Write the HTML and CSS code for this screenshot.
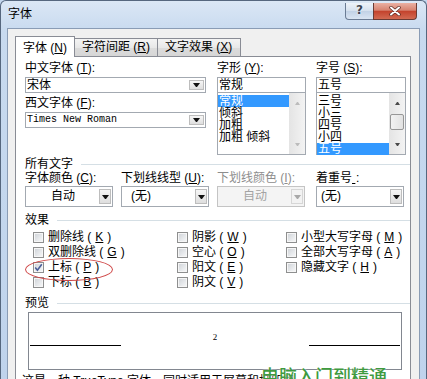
FILE: index.html
```html
<!DOCTYPE html>
<html lang="zh-CN">
<head>
    <meta charset="UTF-8">
    <title>字体</title>
    <link rel="stylesheet" href="styles.css">
</head>
<body>
    <div class="window">
        <div class="titlebar">
            <span class="title">字体</span>
            <div class="caption">
                <div class="cap-help">?</div>
                <div class="cap-close">
                    <svg width="14" height="10" viewBox="0 0 14 10"><path d="M3 1.5 L11 8.5 M11 1.5 L3 8.5" stroke="#5a2a22" stroke-width="3.4" stroke-linecap="round"/><path d="M3 1.5 L11 8.5 M11 1.5 L3 8.5" stroke="#fff" stroke-width="2" stroke-linecap="round"/></svg>
                </div>
            </div>
        </div>
        <div class="client">
            <div class="tabs">
                <div class="tab active">字体 (<u>N</u>)</div>
                <div class="tab wide">字符间距 (<u>R</u>)</div>
                <div class="tab wide">文字效果 (<u>X</u>)</div>
            </div>
            <div class="panel">
                <div class="fonts">
                    <div class="col col-name">
                        <div class="lbl">中文字体 (<u>T</u>):</div>
                        <div class="combo"><span class="val">宋体</span><span class="dd"></span></div>
                        <div class="lbl gap">西文字体 (<u>F</u>):</div>
                        <div class="combo"><span class="val mono">Times New Roman</span><span class="dd"></span></div>
                    </div>
                    <div class="col col-style">
                        <div class="lbl">字形 (<u>Y</u>):</div>
                        <div class="edit">常规</div>
                        <div class="list">
                            <div class="items">
                                <div class="item sel">常规</div>
                                <div class="item">倾斜</div>
                                <div class="item">加粗</div>
                                <div class="item">加粗 倾斜</div>
                            </div>
                            <div class="sbar off">
                                <span class="sb-btn up"></span>
                                <span class="sb-track"></span>
                                <span class="sb-btn down"></span>
                            </div>
                        </div>
                    </div>
                    <div class="col col-size">
                        <div class="lbl">字号 (<u>S</u>):</div>
                        <div class="edit">五号</div>
                        <div class="list">
                            <div class="items">
                                <div class="item">三号</div>
                                <div class="item">小三</div>
                                <div class="item">四号</div>
                                <div class="item">小四</div>
                                <div class="item sel">五号</div>
                            </div>
                            <div class="sbar">
                                <span class="sb-btn up"></span>
                                <span class="sb-track"><span class="thumb"></span></span>
                                <span class="sb-btn down"></span>
                            </div>
                        </div>
                    </div>
                </div>

                <div class="group">所有文字</div>
                <div class="fields">
                    <div class="field">
                        <div class="lbl">字体颜色 (<u>C</u>):</div>
                        <div class="combo tall"><span class="val center">自动</span><span class="dd"></span></div>
                    </div>
                    <div class="field">
                        <div class="lbl">下划线线型 (<u>U</u>):</div>
                        <div class="combo tall"><span class="val pad9">(无)</span><span class="dd"></span></div>
                    </div>
                    <div class="field disabled">
                        <div class="lbl">下划线颜色 (<u>I</u>):</div>
                        <div class="combo tall"><span class="val center">自动</span><span class="dd"></span></div>
                    </div>
                    <div class="field">
                        <div class="lbl">着重号<u class="blank">&nbsp;</u>:</div>
                        <div class="combo tall"><span class="val pad4">(无)</span><span class="dd"></span></div>
                    </div>
                </div>

                <div class="group gap6">效果</div>
                <div class="effects">
                    <div class="cb"><span class="box"></span>删除线 (<u>K</u>)</div>
                    <div class="cb"><span class="box"></span>阴影 (<u>W</u>)</div>
                    <div class="cb"><span class="box"></span>小型大写字母 (<u>M</u>)</div>
                    <div class="cb"><span class="box"></span>双删除线 (<u>G</u>)</div>
                    <div class="cb"><span class="box"></span>空心 (<u>O</u>)</div>
                    <div class="cb"><span class="box"></span>全部大写字母 (<u>A</u>)</div>
                    <div class="cb ring"><span class="box"><svg width="9" height="9" viewBox="0 0 9 9"><path d="M1.2 4.6 L3.4 7.2 L7.8 1.2" fill="none" stroke="#4c5f9a" stroke-width="1.6"/></svg></span>上标 (<u>P</u>)</div>
                    <div class="cb"><span class="box"></span>阳文 (<u>E</u>)</div>
                    <div class="cb"><span class="box"></span>隐藏文字 (<u>H</u>)</div>
                    <div class="cb"><span class="box"></span>下标 (<u>B</u>)</div>
                    <div class="cb"><span class="box"></span>阴文 (<u>V</u>)</div>
                </div>

                <div class="group gap6">预览</div>
                <div class="preview">
                    <span class="rule"></span>
                    <span class="sample">2</span>
                    <span class="rule"></span>
                </div>
                <div class="note">这是一种 TrueType 字体，同时适用于屏幕和打印机。</div>
            </div>
        </div>
        <div class="watermark">电脑入门到精通</div>
    </div>
</body>
</html>
```

FILE: styles.css
```css
* {
    box-sizing: border-box;
}
body {
    margin: 0;
    font: 12px/14px "Liberation Sans", "Noto Sans CJK SC", sans-serif;
    color: #000;
    background: #c4d7ee;
}
u {
    text-decoration-thickness: 1px;
    text-underline-offset: 1px;
}
.window {
    position: relative;
    width: 427px;
    height: 379px;
    overflow: hidden;
    padding: 0 6px;
    border: 1px solid #56677e;
    border-bottom: none;
    border-radius: 6px 6px 0 0;
    background: linear-gradient(to bottom, #dbe7f5 0, #c8daef 30px, #bfd3ec 100%);
}
.titlebar {
    display: flex;
    justify-content: space-between;
    height: 27px;
}
.title {
    padding: 6px 0 0 1px;
}
.caption {
    display: flex;
    margin: 2px 3px 0 0;
    height: 17px;
}
.cap-help {
    width: 29px;
    border: 1px solid #6b7c94;
    border-top: none;
    border-radius: 0 0 0 4px;
    background: linear-gradient(#eef3f9, #d6e1ee 48%, #c2d2e6 52%, #dae5f2);
    color: #3d4652;
    font: bold 12px/15px "DejaVu Sans", sans-serif;
    text-align: center;
    text-shadow: 0 0 2px #fff;
}
.cap-close {
    width: 44px;
    margin-left: -1px;
    border: 1px solid #6a3b34;
    border-top: none;
    border-radius: 0 0 4px 0;
    background: linear-gradient(#eab0a2, #d78370 45%, #c4432d 52%, #d26a52);
    display: flex;
    align-items: center;
    justify-content: center;
}
.client {
    width: 413px;
    height: 360px;
    border: 1px solid #8a9cb5;
    background: #f0f0f0;
}
.tabs {
    display: flex;
    align-items: flex-end;
    padding: 7px 0 0 7px;
}
.tab {
    width: 60px;
    height: 18px;
    padding: 1px 0 0 7px;
    border: 1px solid #898c95;
    border-bottom: none;
    background: linear-gradient(#f4f4f4, #e8e8e8 50%, #dcdcdc 50%, #d6d6d6);
    white-space: nowrap;
}
.tab.wide {
    width: 84px;
    margin-left: -1px;
}
.tab.active {
    position: relative;
    z-index: 1;
    height: 21px;
    margin-bottom: -1px;
    padding-top: 4px;
    background: #fff;
}
.panel {
    width: 396px;
    height: 340px;
    margin-left: 7px;
    padding: 4px 0 0 9px;
    border: 1px solid #898c95;
    background: #fff;
}
.fonts {
    display: flex;
    align-items: flex-start;
}
.col-name {
    width: 181px;
}
.col-style {
    width: 89px;
    margin-left: 11px;
}
.col-size {
    width: 90px;
    margin-left: 10px;
}
.lbl {
    height: 14px;
    white-space: nowrap;
}
.lbl.gap {
    margin-top: 3px;
}
.combo {
    display: flex;
    height: 16px;
    margin-top: 2px;
    border: 1px solid #a3a9b1;
    background: #fff;
}
.combo .val {
    flex: 1;
    padding-left: 1px;
    white-space: nowrap;
}
.combo .mono {
    font: 10px/14px "Liberation Mono", monospace;
}
.combo .center {
    text-align: center;
}
.combo .pad9 {
    padding-left: 9px;
}
.combo .pad4 {
    padding-left: 4px;
}
.dd {
    display: flex;
    align-items: center;
    justify-content: center;
    width: 15px;
    margin: 2px 1px 2px 0;
    border: 1px solid #bdbdbd;
    background: linear-gradient(#f6f6f6, #dedede);
}
.dd::after {
    content: "";
    width: 1px;
    border-style: solid;
    border-width: 4px 3px 0 3px;
    border-color: #111 transparent transparent transparent;
}
.combo.tall {
    width: 88px;
    height: 21px;
    margin-top: 1px;
}
.combo.tall .val {
    line-height: 19px;
}
.combo.tall .dd {
    width: 12px;
}
.edit {
    height: 16px;
    margin-top: 2px;
    padding-left: 1px;
    border: 1px solid #a3a9b1;
}
.list {
    display: flex;
    height: 63px;
    margin-top: -1px;
    border: 1px solid #a3a9b1;
}
.items {
    flex: 1;
    padding-top: 2px;
}
.item {
    height: 12px;
    line-height: 12px;
    padding-left: 1px;
    white-space: pre;
}
.item.sel {
    background: #3399ff;
    color: #fff;
}
.sbar {
    display: flex;
    flex-direction: column;
    width: 16px;
    background: linear-gradient(to right, #e4e4e4, #f3f3f3);
}
.sb-btn {
    display: flex;
    align-items: center;
    justify-content: center;
    height: 20px;
}
.sb-btn::after {
    content: "";
    width: 1px;
    border-style: solid;
    border-color: transparent;
}
.sb-btn.up::after {
    border-width: 0 2px 3px 2px;
    border-bottom-color: #4a4a4a;
}
.sb-btn.down::after {
    border-width: 3px 2px 0 2px;
    border-top-color: #4a4a4a;
}
.sbar.off .sb-btn.up::after {
    border-bottom-color: #bcbcbc;
}
.sbar.off .sb-btn.down::after {
    border-top-color: #bcbcbc;
}
.sb-track {
    flex: 1;
    padding: 1px 1px 0 1px;
}
.thumb {
    display: block;
    height: 16px;
    border: 1px solid #979797;
    border-radius: 2px;
    background: linear-gradient(to right, #f2f2f2, #e2e2e2);
}
.group {
    display: flex;
    align-items: center;
    margin-top: 2px;
}
.group::after {
    content: "";
    flex: 1;
    height: 1px;
    margin: 0 0 0 8px;
    background: #d5dfe5;
}
.group.gap6 {
    margin-top: 6px;
}
.fields {
    display: grid;
    grid-template-columns: 96px 96px 99px 88px;
}
.disabled .lbl {
    color: #8d8d8d;
}
.disabled .combo {
    border-color: #c4c4c4;
    background: #f4f4f4;
    color: #a3a3a3;
}
.disabled .dd {
    border-color: #d6d6d6;
    background: #f2f2f2;
}
.disabled .dd::after {
    border-top-color: #a8a8a8;
}
u.blank {
    display: inline-block;
    width: 4px;
}
.effects {
    display: grid;
    grid-template-columns: 144px 109px auto;
    grid-auto-rows: 15px;
    margin-top: 3px;
    padding-left: 8px;
}
.cb {
    display: flex;
    align-items: center;
    gap: 4px;
    line-height: 15px;
    white-space: nowrap;
}
.box {
    display: flex;
    align-items: center;
    justify-content: center;
    width: 11px;
    height: 11px;
    border: 1px solid #8e8f8f;
    box-shadow: inset 0 0 0 1px #f6f6f6;
    background: linear-gradient(135deg, #cdd1d6, #eceef0 70%, #f7f7f7);
}
.ring {
    position: relative;
}
.ring::after {
    content: "";
    position: absolute;
    left: -8px;
    top: -2px;
    width: 86px;
    height: 21px;
    border: 1.5px solid #cf4747;
    border-radius: 50%;
}
.preview {
    display: flex;
    justify-content: space-between;
    align-items: flex-start;
    width: 374px;
    height: 58px;
    margin: 2px 0 0 3px;
    padding: 0 1px;
    border: 1px solid #828790;
}
.rule {
    width: 91px;
    height: 1px;
    margin-top: 32px;
    background: #000;
}
.sample {
    margin-top: 19px;
    font: 9px/10px "Liberation Serif", serif;
}
.note {
    margin: 4px 0 0 -3px;
    white-space: nowrap;
}
.watermark {
    position: absolute;
    left: 260px;
    top: 364px;
    color: #3f9b3f;
    font: 500 18px/20px "Noto Sans CJK SC", sans-serif;
    text-shadow: 0 0 2px #fff;
}
```
